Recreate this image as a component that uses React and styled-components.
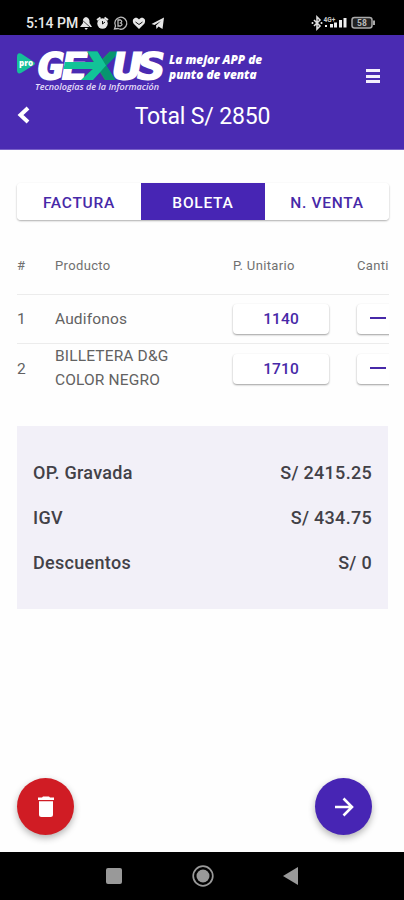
import styled, { createGlobalStyle } from 'styled-components';

const details = [
  { id: 1, name: 'Audifonos', price: 1140 },
  { id: 2, name: 'BILLETERA D&G COLOR NEGRO', price: 1710 },
];

const totals = [
  { label: 'OP. Gravada', value: 'S/ 2415.25' },
  { label: 'IGV', value: 'S/ 434.75' },
  { label: 'Descuentos', value: 'S/ 0' },
];

const Logo = () => (
  <svg width="148" height="46" viewBox="0 0 148 46" overflow="visible">
    <path d="M1 8Q1 3 5 4.500L18 13Q20 14.500 18 16L5 24Q1 25.500 1 21Z" fill="#16bf9a" />
    <text x="3" y="17" fontFamily="Open Sans, sans-serif" fontWeight="800" fontSize="8" fill="#fff" textLength="14" lengthAdjust="spacingAndGlyphs">pro</text>
    <g
      transform="translate(5.5 0) skewX(-10)"
      fontFamily="DejaVu Sans Mono, monospace"
      fontWeight="700"
      fontSize="36.500"
      fill="#fff"
      stroke="#fff"
      strokeWidth="1.800"
      strokeLinejoin="miter"
    >
      <text x="18.500" y="30" textLength="27" lengthAdjust="spacingAndGlyphs">G</text>
      <text x="43" y="30" textLength="26" lengthAdjust="spacingAndGlyphs">E</text>
      <text x="67" y="30" fill="#07956f" stroke="#07956f" textLength="31" lengthAdjust="spacingAndGlyphs">X</text>
      <text x="94.500" y="30" textLength="28" lengthAdjust="spacingAndGlyphs">U</text>
      <text x="118.500" y="30" textLength="28" lengthAdjust="spacingAndGlyphs">S</text>
    </g>
    <path d="M49 13H78L71.500 2.500H81.500L90 16.500L77 31H65L77 20H47.500Z" fill="#12c397" />
    <text x="19" y="41" fontFamily="Open Sans, sans-serif" fontStyle="italic" fontWeight="600" fontSize="8" fill="#e7dffb" textLength="124" lengthAdjust="spacingAndGlyphs">
      Tecnologías de la Información
    </text>
  </svg>
);

const StatusIcons = () => (
  <svg width="88" height="16" viewBox="0 0 88 16" fill="#e6e6e6">
    <path d="M7 2Q11 3 10.500 8L13 12H1L4 8Q3 3 7 2ZM5.500 13H9L7 15Z" />
    <path d="M2 4L12 13" stroke="#000" strokeWidth=".7" />
    <circle cx="23.500" cy="8.500" r="5.200" />
    <path d="M18 5L21.500 2.500M25.500 2.500L29 5" stroke="#e6e6e6" strokeWidth="2" />
    <path d="M23.500 6V9L26 7" fill="none" stroke="#111" />
    <path d="M35.500 14L36.500 11A6 6 0 1 1 39 13.500Z" fill="none" stroke="#bbb" strokeWidth="1.300" />
    <path d="M39 5H41.500Q44 6.500 41.500 8Q44.500 9.500 41.500 11H39Z" fill="none" stroke="#bbb" strokeWidth="1.300" />
    <path d="M60 14L54.500 8.500C52 3.500 57.500 1 60 4.500C62.500 1 68 3.500 65.500 8.500Z" />
    <path d="M56.500 7L60 9.500L63.500 7" fill="none" stroke="#111" />
    <path d="M72.500 9L85 2.500L83.500 14L79.500 11.500L77.500 14L77 10.500L82 6L75.500 10Z" />
  </svg>
);

const SignalIcons = () => (
  <svg width="67" height="16" viewBox="0 0 67 16" fill="#eee" overflow="visible">
    <path d="M3 5L9 11L6 14V2L9 5L3 11" fill="none" stroke="#ddd" strokeWidth="1.600" />
    <circle cx="1.500" cy="8" r="1" />
    <circle cx="10.500" cy="8" r="1" />
    <text x="12.500" y="6.500" fontFamily="Roboto, sans-serif" fontSize="6.500" fontWeight="700" fill="#ccc">4G+</text>
    <path d="M14 10H16V12H14ZM19 9H22V12.500H19ZM23 7.500H26V12.500H23ZM28 5H31V12.500H28ZM32.500 3H35.500V12.500H32.500Z" />
    <rect x="41" y="2.500" width="20" height="10.500" rx="2.500" fill="#222" stroke="#aaa" strokeWidth="1.500" />
    <rect x="62" y="5.500" width="2" height="4.500" fill="#aaa" />
    <text x="46" y="11" fontFamily="Roboto, sans-serif" fontSize="8.500" fontWeight="700" fill="#bbb">58</text>
  </svg>
);

const App = () => {
  return (
    <>
      <GlobalStyle />
      <Screen>
        <StatusBar>
          <Clock>5:14 PM</Clock>
          <StatusIcons />
          <Spacer />
          <SignalIcons />
        </StatusBar>

        <Header>
          <Brand>
            <Logo />
            <Slogan>La mejor APP de<br />punto de venta</Slogan>
            <MenuButton aria-label="Menu">
              <span />
              <span />
              <span />
            </MenuButton>
          </Brand>
          <TitleRow>
            <BackButton>
              <svg width="14" height="18" viewBox="0 0 14 18" fill="none" stroke="#fff" strokeWidth="4">
                <path d="M12 2L4.500 9L12 16" />
              </svg>
            </BackButton>
            <Title>Total S/ 2850</Title>
          </TitleRow>
        </Header>

        <Content>
          <Tabs>
            <Tab>FACTURA</Tab>
            <Tab $active>BOLETA</Tab>
            <Tab>N. VENTA</Tab>
          </Tabs>

          <Table>
            <TableHead>
              <span>#</span>
              <span>Producto</span>
              <span>P. Unitario</span>
              <span>Canti</span>
            </TableHead>
            {details.map((item) => (
              <TableRow key={item.id}>
                <span>{item.id}</span>
                <ProductName>{item.name}</ProductName>
                <PriceButton>{item.price}</PriceButton>
                <MinusButton aria-label="Restar" />
              </TableRow>
            ))}
          </Table>

          <Summary>
            {totals.map((total) => (
              <SummaryRow key={total.label}>
                <span>{total.label}</span>
                <span>{total.value}</span>
              </SummaryRow>
            ))}
          </Summary>
        </Content>

        <Actions>
          <RoundButton $color="#d01c24" aria-label="Eliminar">
            <svg width="18" height="22" viewBox="0 0 18 22" fill="#fff">
              <path d="M1 1.500H5L6 .5H12L13 1.500H17V4H1ZM2 5.300H16V18.500Q16 21 13.500 21H4.500Q2 21 2 18.500Z" />
            </svg>
          </RoundButton>
          <RoundButton $color="#4725b4" aria-label="Continuar">
            <svg width="20" height="20" viewBox="0 0 20 20" fill="none" stroke="#fff" strokeWidth="2.600">
              <path d="M1 10H18M9.500 1.500L18 10L9.500 18.500" />
            </svg>
          </RoundButton>
        </Actions>

        <NavBar>
          <svg width="16" height="16"><rect width="16" height="16" rx="2" fill="#999" /></svg>
          <svg width="22" height="22">
            <circle cx="11" cy="11" r="9.800" fill="none" stroke="#999" strokeWidth="1.700" />
            <circle cx="11" cy="11" r="6.500" fill="#999" />
          </svg>
          <svg width="16" height="18"><path d="M0 9L15 0V18Z" fill="#999" /></svg>
        </NavBar>
      </Screen>
    </>
  );
};

export default App;

const GlobalStyle = createGlobalStyle`
  * {
    box-sizing: border-box;
  }
  body {
    margin: 0;
    background: #fff;
    font-family: Roboto, sans-serif;
  }
  svg {
    display: block;
    flex-shrink: 0;
  }
  button {
    border: 0;
    padding: 0;
    font-family: inherit;
  }
`;

const Screen = styled.div`
  display: flex;
  flex-direction: column;
  width: 404px;
  height: 900px;
  overflow: hidden;
  background: #fefefe;
`;

const StatusBar = styled.div`
  display: flex;
  align-items: center;
  height: 35px;
  padding: 10px 26px 0 26px;
  background: #000;
  color: #e8e8e8;
`;

const Clock = styled.span`
  width: 53px;
  font-size: 14px;
  font-weight: 500;
  white-space: nowrap;
`;

const Spacer = styled.div`
  flex: 1;
`;

const Header = styled.header`
  height: 115px;
  padding: 14px 23px 0 16px;
  background: #4a2bb2;
  border-bottom: 1px solid #7961c8;
  color: #fff;
`;

const Brand = styled.div`
  display: flex;
  height: 46px;
`;

const Slogan = styled.p`
  margin: 3px 0 0 5px;
  font-family: 'Open Sans', sans-serif;
  font-size: 11.8px;
  font-style: italic;
  font-weight: 800;
  line-height: 15px;
  white-space: nowrap;
`;

const MenuButton = styled.button`
  display: flex;
  flex-direction: column;
  gap: 2.5px;
  width: 14px;
  margin: 20px 1px 0 auto;
  background: none;

  span {
    height: 3px;
    background: #f3effc;
  }
`;

const TitleRow = styled.div`
  display: flex;
  align-items: center;
  height: 40px;
`;

const BackButton = styled.button`
  width: 20px;
  background: none;
`;

const Title = styled.h1`
  flex: 1;
  margin: 3px 12px 0 0;
  font-size: 23px;
  font-weight: 400;
  letter-spacing: -0.15px;
  text-align: center;
`;

const Content = styled.main`
  flex: 1;
  padding: 33px 15px 0 17px;
`;

const Tabs = styled.div`
  display: flex;
  height: 37px;
  border-radius: 4px;
  box-shadow: 0 1px 2px rgba(0, 0, 0, 0.32);
  overflow: hidden;
`;

const Tab = styled.button`
  flex: 1;
  padding-top: 2px;
  background: ${({ $active }) => ($active ? '#4725b4' : '#fff')};
  color: ${({ $active }) => ($active ? '#fff' : '#4729a8')};
  font-size: 15.5px;
  font-weight: 500;
  letter-spacing: 0.75px;
`;

const Table = styled.section`
  margin-top: 14px;
  overflow: hidden;
`;

const TableHead = styled.div`
  display: grid;
  grid-template-columns: 38px 178px 124px 96px;
  align-items: center;
  height: 61px;
  padding-top: 2px;
  border-bottom: 1px solid #ececec;
  color: #707070;
  font-size: 13px;
  letter-spacing: 0.35px;
`;

const TableRow = styled.div`
  display: grid;
  grid-template-columns: 38px 178px 124px 96px;
  align-items: center;
  height: 49px;
  border-bottom: 1px solid #ececec;
  color: #626262;
  font-size: 15.5px;
  letter-spacing: 0.15px;

  &:last-child {
    border-bottom: 0;
  }
`;

const ProductName = styled.span`
  width: 140px;
  padding-bottom: 1px;
  line-height: 24px;
`;

const PriceButton = styled.button`
  width: 96px;
  height: 30px;
  border-radius: 4px;
  background: #fff;
  box-shadow: 0 1px 2px rgba(0, 0, 0, 0.38);
  color: #4729a8;
  font-size: 15.5px;
  font-weight: 500;
  letter-spacing: 0.1px;
`;

const MinusButton = styled(PriceButton)`
  display: flex;
  align-items: center;
  padding: 0 0 2px 13px;

  &::before {
    content: '';
    width: 16px;
    height: 2px;
    background: #4729a8;
  }
`;

const Summary = styled.section`
  display: flex;
  flex-direction: column;
  height: 183px;
  margin: 33px 1px 0 0;
  padding: 24px 16px;
  background: #f2f0f8;
`;

const SummaryRow = styled.div`
  display: flex;
  align-items: center;
  justify-content: space-between;
  height: 45px;
  color: #424147;
  font-size: 18px;
  font-weight: 500;
  letter-spacing: 0.3px;
`;

const Actions = styled.div`
  display: flex;
  justify-content: space-between;
  padding: 0 32px 17px 17px;
`;

const RoundButton = styled.button`
  display: flex;
  align-items: center;
  justify-content: center;
  width: 57px;
  height: 57px;
  border-radius: 50%;
  background: ${({ $color }) => $color};
  box-shadow: 0 3px 7px rgba(0, 0, 0, 0.3);
`;

const NavBar = styled.nav`
  display: flex;
  align-items: center;
  justify-content: space-between;
  height: 48px;
  padding: 0 105px 0 106px;
  background: #000;
`;
